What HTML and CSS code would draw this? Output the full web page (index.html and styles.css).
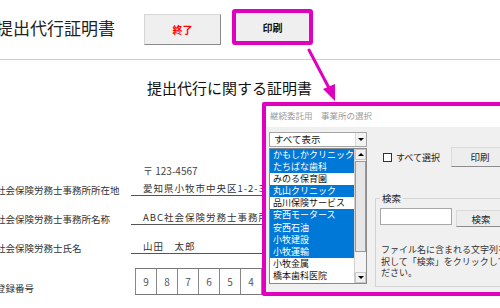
FILE: index.html
```html
<!DOCTYPE html>
<html lang="ja">
<head>
    <meta charset="UTF-8">
    <meta name="viewport" content="width=device-width, initial-scale=1.0">
    <title>提出代行証明書</title>
    <link rel="stylesheet" href="styles.css">
</head>
<body>
    <div class="page">
        <div class="toolbar">
            <h1 class="doc-title">提出代行証明書</h1>
            <button class="btn-sheet btn-end">終了</button>
            <div class="highlight">
                <button class="btn-sheet btn-print">印刷</button>
            </div>
        </div>

        <h2 class="cert-heading">提出代行に関する証明書</h2>

        <div class="postal">〒 123-4567</div>
        <div class="form-row">
            <div class="form-label">社会保険労務士事務所所在地</div>
            <div class="form-value">愛知県小牧市中央区1-2-3</div>
        </div>
        <div class="form-row">
            <div class="form-label">社会保険労務士事務所名称</div>
            <div class="form-value">ABC社会保険労務士事務所</div>
        </div>
        <div class="form-row">
            <div class="form-label">社会保険労務士氏名</div>
            <div class="form-value">山田　太郎</div>
        </div>
        <div class="form-row reg-row">
            <div class="form-label">登録番号</div>
            <div class="reg-boxes">
                <span>9</span><span>8</span><span>7</span><span>6</span><span>5</span><span>4</span><span>3</span><span>2</span>
            </div>
        </div>
    </div>

    <!-- 吹き出しの矢印 -->
    <svg class="callout-arrow" width="45" height="62" viewBox="0 0 45 62">
        <line x1="9" y1="6" x2="29" y2="44" stroke="#e000c0" stroke-width="3" stroke-linecap="round"/>
        <polygon points="35,57 23,45 35,40" fill="#e000c0"/>
    </svg>

    <div class="dialog">
        <div class="dialog-title">継続委託用　事業所の選択</div>
        <div class="dialog-body">
            <div class="list-col">
                <div class="combo">
                    <span class="combo-text">すべて表示</span>
                    <span class="combo-btn"><i class="tri-down"></i></span>
                </div>
                <div class="listbox">
                    <div class="list-items">
                        <div class="item selected">かもしかクリニック</div>
                        <div class="item selected">たちばな歯科</div>
                        <div class="item">みのる保育園</div>
                        <div class="item selected">丸山クリニック</div>
                        <div class="item">品川保険サービス</div>
                        <div class="item selected">安西モータース</div>
                        <div class="item selected">安西石油</div>
                        <div class="item selected">小牧建設</div>
                        <div class="item selected">小牧運輸</div>
                        <div class="item">小牧金属</div>
                        <div class="item">橋本歯科医院</div>
                    </div>
                    <div class="scrollbar">
                        <span class="sb-btn"><i class="tri-up"></i></span>
                        <span class="sb-thumb"></span>
                        <span class="sb-track"></span>
                        <span class="sb-btn"><i class="tri-down"></i></span>
                    </div>
                </div>
            </div>

            <div class="side-col">
                <div class="select-row">
                    <label class="check-all"><span class="checkbox"></span>すべて選択</label>
                    <button class="btn-win btn-dialog-print">印刷</button>
                </div>
                <fieldset class="search-group">
                    <legend>検索</legend>
                    <div class="search-row">
                        <input type="text" class="search-input">
                        <button class="btn-win btn-search">検索</button>
                    </div>
                    <p class="search-help">ファイル名に含まれる文字列を選<br>択して「検索」をクリックしてく<br>ださい。</p>
                </fieldset>
            </div>
        </div>
    </div>
</body>
</html>
```

FILE: styles.css
```css
html, body {
    margin: 0;
    overflow: hidden;
}

body {
    width: 500px;
    height: 308px;
    position: relative;
    background: #fff;
    font-family: "Noto Sans CJK JP", "Noto Sans", sans-serif;
    color: #222;
}

.page {
    margin-left: -4px;
}

/* 上部のボタン列 */
.toolbar {
    display: flex;
    align-items: flex-start;
    height: 59px;
    border-bottom: 1px solid #cfcfcf;
}

.doc-title {
    width: 148px;
    margin: 16px 0 0;
    font-size: 17px;
    font-weight: normal;
    line-height: 24px;
    white-space: nowrap;
}

.btn-sheet {
    font-family: inherit;
    font-weight: bold;
    font-size: 10px;
    background: #efefef;
    padding: 0;
}

.btn-end {
    width: 77px;
    height: 31px;
    margin-top: 14px;
    color: #f00;
    border: 1px solid #d6d6d6;
    border-right-color: #8a8a8a;
    border-bottom-color: #8a8a8a;
}

.highlight {
    width: 81px;
    height: 36px;
    margin: 9px 0 0 11px;
    box-sizing: border-box;
    border: 4px solid #e000c0;
    border-radius: 3px;
}

.btn-print {
    display: block;
    width: 100%;
    height: 100%;
    border: none;
    color: #111;
}

.cert-heading {
    margin: 18px 0 0 151px;
    font-size: 15px;
    font-weight: normal;
    line-height: 20px;
    color: #111;
}

/* 証明書の記入欄 */
.postal {
    margin: 67px 0 0 147px;
    font-size: 10px;
    line-height: 12px;
    color: #444;
}

.form-row {
    display: flex;
    align-items: flex-end;
    margin-top: 15px;
}

.postal + .form-row {
    margin-top: 5px;
}

.form-label {
    width: 135px;
    font-size: 9.5px;
    line-height: 12px;
    color: #333;
    white-space: nowrap;
}

.form-value {
    width: 220px;
    padding: 0 0 1px 12px;
    border-bottom: 1px solid #555;
    font-size: 9.5px;
    letter-spacing: 1px;
    line-height: 12px;
    color: #333;
    white-space: nowrap;
}

.reg-row {
    margin-top: 14px;
}

.reg-row .form-label {
    margin-bottom: 1px;
}

.reg-boxes {
    display: flex;
    margin-left: 4px;
    border: 1px solid #777;
    border-left: none;
}

.reg-boxes span {
    width: 20px;
    height: 25px;
    line-height: 25px;
    text-align: center;
    border-left: 1px solid #888;
    font-size: 10px;
    color: #555;
}

.callout-arrow {
    position: absolute;
    left: 300px;
    top: 44px;
}

/* 事業所選択ダイアログ */
.dialog {
    position: absolute;
    left: 262px;
    top: 102px;
    width: 262px;
    height: 194px;
    box-sizing: border-box;
    border: 4px solid #e000c0;
    border-radius: 2px;
    background: #f0f0f0;
    font-size: 9px;
    color: #222;
}

.dialog-title {
    height: 21px;
    line-height: 18px;
    padding-left: 4px;
    background: #fff;
    font-size: 8.5px;
    color: #9a9a9a;
    white-space: nowrap;
}

.dialog-body {
    display: flex;
    padding: 5px 0 0 3px;
}

.list-col {
    width: 98px;
}

.combo {
    display: flex;
    height: 15px;
    box-sizing: border-box;
    border: 1px solid #a5a5a5;
    background: #fff;
}

.combo-text {
    flex: 1;
    padding-left: 4px;
    font-size: 9.5px;
    line-height: 13px;
}

.combo-btn {
    width: 10px;
    display: flex;
    align-items: center;
    justify-content: center;
    background: #f3f3f3;
    border-left: 1px solid #dcdcdc;
}

.tri-down, .tri-up {
    display: block;
    width: 0;
    height: 0;
    border-left: 3px solid transparent;
    border-right: 3px solid transparent;
}

.tri-down {
    border-top: 3px solid #000;
}

.tri-up {
    border-bottom: 3px solid #000;
}

.listbox {
    display: flex;
    height: 136px;
    margin-top: 1px;
    box-sizing: border-box;
    border: 1px solid #8a8a8a;
    background: #fff;
}

.list-items {
    flex: 1;
    overflow: hidden;
}

.item {
    height: 12.1px;
    line-height: 12.1px;
    padding-left: 3px;
    white-space: nowrap;
    overflow: hidden;
    color: #111;
}

.item.selected {
    background: #0078d7;
    color: #fff;
}

.scrollbar {
    width: 11px;
    display: flex;
    flex-direction: column;
    background: #f4f4f4;
    border-left: 1px solid #d0d0d0;
}

.sb-btn {
    height: 11px;
    display: flex;
    align-items: center;
    justify-content: center;
    background: #f0f0f0;
    border: 1px solid #c8c8c8;
    box-sizing: border-box;
}

.sb-thumb {
    height: 91px;
    margin-top: 1px;
    background: #e6e6e6;
    border: 1px solid #9a9a9a;
    box-sizing: border-box;
}

.sb-track {
    flex: 1;
}

.side-col {
    flex: 1;
    margin-left: 8px;
}

.select-row {
    display: flex;
    align-items: center;
    height: 20px;
    margin-top: 15px;
}

.check-all {
    display: flex;
    align-items: center;
    width: 76px;
    white-space: nowrap;
}

.checkbox {
    width: 9px;
    height: 9px;
    box-sizing: border-box;
    margin: 0 4px 0 8px;
    background: #fff;
    border: 1px solid #333;
}

.btn-win {
    font-family: inherit;
    font-size: 9.5px;
    color: #222;
    padding: 0;
    background: #ededed;
    border: 1px solid #dadada;
    border-right-color: #8c8c8c;
    border-bottom-color: #8c8c8c;
}

.btn-dialog-print {
    width: 58px;
    height: 20px;
}

.search-group {
    margin: 25px 0 0;
    padding: 0 0 7px 4px;
    border: 1px solid #d2d2d2;
    border-right: none;
}

.search-group legend {
    padding: 0 2px;
    font-size: 9.5px;
    line-height: 12px;
}

.search-row {
    display: flex;
    align-items: flex-start;
    margin-top: 4px;
}

.search-input {
    width: 72px;
    height: 17px;
    box-sizing: border-box;
    margin: 0;
    border: 1px solid #a8a8a8;
    background: #fff;
}

.btn-search {
    width: 50px;
    height: 17px;
    margin: 2px 0 0 4px;
}

.search-help {
    margin: 17px 0 0 1px;
    font-size: 9px;
    line-height: 11.7px;
    color: #333;
    white-space: nowrap;
}
```
